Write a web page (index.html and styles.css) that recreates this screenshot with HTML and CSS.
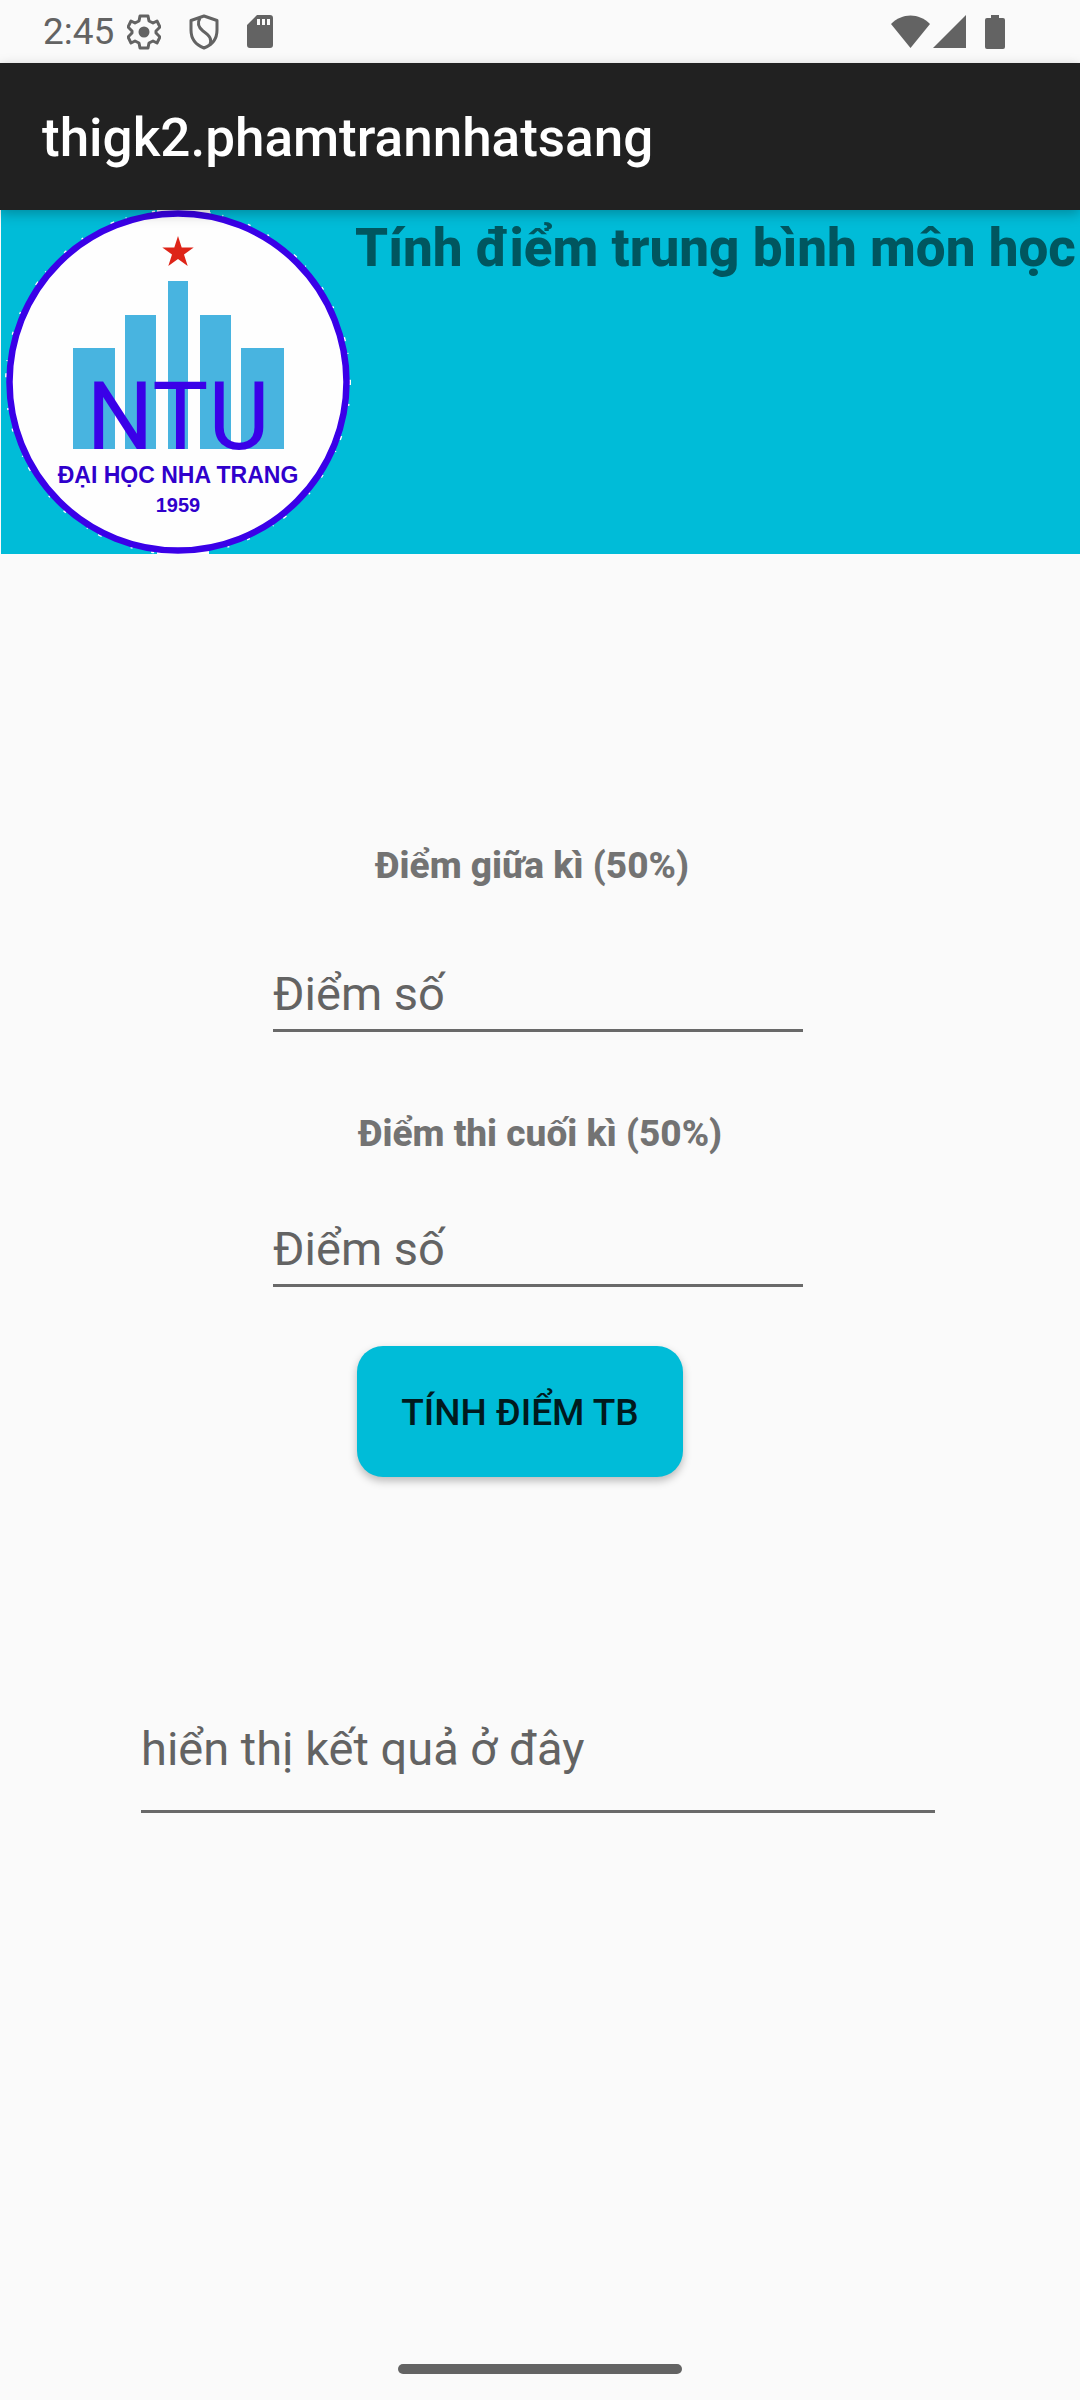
FILE: index.html
```html
<!DOCTYPE html>
<html lang="vi">
<head>
  <meta charset="utf-8">
  <meta name="viewport" content="width=device-width, initial-scale=1">
  <title>thigk2.phamtrannhatsang</title>
  <link rel="stylesheet" href="styles.css">
</head>
<body>
  <div class="status">
    <span class="clock">2:45</span>
    <div class="notices">
      <svg width="34" height="36" viewBox="0 0 34 36" fill="none" stroke="#636363" stroke-width="3" stroke-linejoin="round" aria-hidden="true">
        <path d="M13 2h8l1 5 4 2 4-2 3 6-4 4v2l4 4-3 6-4-2-4 2-1 5h-8l-1-5-4-2-4 2-3-6 4-4v-2l-4-4 3-6 4 2 4-2z"/>
        <circle cx="17" cy="18" r="5.500" fill="#636363" stroke="none"/>
      </svg>
      <svg width="30" height="36" viewBox="0 0 30 36" fill="none" stroke="#636363" stroke-width="3" stroke-linejoin="round" aria-hidden="true">
        <path d="M15 2L28 6.500V16c0 9-5 15-13 18C7 31 2 25 2 16V6.500z"/>
        <path d="M11 4C8 9 9 13 14 17c7 5 9 8 7 14"/>
      </svg>
      <svg width="26" height="34" viewBox="0 0 26 34" aria-hidden="true">
        <path fill="#636363" fill-rule="evenodd" d="M10 0h13a3 3 0 0 1 3 3v27a3 3 0 0 1-3 3H3a3 3 0 0 1-3-3V10zM10 4v6h3V4zm5 0v6h3V4zm5 0v6h3V4z"/>
      </svg>
    </div>
    <div class="system">
      <svg width="40" height="34" viewBox="0 0 40 34" fill="#636363" aria-hidden="true"><path d="M0 9C11-2.500 28-2.500 39 9L19.500 33z"/></svg>
      <svg width="34" height="34" viewBox="0 0 34 34" fill="#636363" aria-hidden="true"><path d="M33 0v33H0z"/></svg>
      <svg class="battery" width="20" height="34" viewBox="0 0 20 34" fill="#636363" aria-hidden="true"><path d="M6 0h8v3h4a2 2 0 0 1 2 2v27a2 2 0 0 1-2 2H2a2 2 0 0 1-2-2V5a2 2 0 0 1 2-2h4z"/></svg>
    </div>
  </div>

  <header class="appbar"><h1 class="appbar-title">thigk2.phamtrannhatsang</h1></header>

  <main class="content">
    <section class="banner">
      <svg class="logo" width="354" height="344" viewBox="1 0 354 344" role="img" aria-label="Đại học Nha Trang">
        <circle cx="178" cy="172" r="172" fill="none" stroke="#fff" stroke-width="2" stroke-dasharray="3 19 2 31 4 12 1 26"/>
        <path d="M157 0h53v3h-53zM157 344h52v-3h-52z" fill="#fff"/>
        <circle cx="178" cy="172" r="168.500" fill="#fefefe" stroke="#3a00e8" stroke-width="6.500"/>
        <path fill="#de2418" d="M178 26l3.700 11.400h12l-9.700 7.100 3.700 11.500-9.700-7.100-9.700 7.100 3.700-11.500-9.700-7.100h12z"/>
        <path fill="#48b4e0" d="M73 138h42v101H73zM125 105h31v134h-31zM168 71h20v168h-20zM200 105h31v134h-31zM241 138h43v101h-43z"/>
        <text class="logo-mark" x="178" y="239">NTU</text>
        <text class="logo-name" x="178" y="273">ĐẠI HỌC NHA TRANG</text>
        <text class="logo-year" x="178" y="302">1959</text>
      </svg>
      <h2 class="banner-title">Tính điểm trung bình môn học</h2>
    </section>

    <form class="form">
      <label class="label label-mid" for="midterm">Điểm giữa kì (50%)</label>
      <input class="field" id="midterm" type="text" inputmode="decimal" placeholder="Điểm số">
      <label class="label label-final" for="final">Điểm thi cuối kì (50%)</label>
      <input class="field field-final" id="final" type="text" inputmode="decimal" placeholder="Điểm số">
      <button class="submit" type="button">TÍNH ĐIỂM TB</button>
      <input class="field result" type="text" aria-label="Kết quả" placeholder="hiển thị kết quả ở đây">
    </form>
  </main>

  <footer class="navbar"><div class="handle"></div></footer>
</body>
</html>
```
FILE: styles.css
```css
* {
  box-sizing: border-box;
}

body {
  margin: 0;
  min-height: 100vh;
  display: flex;
  flex-direction: column;
  background: #fafafa;
  font-family: Roboto, "Noto Sans", sans-serif;
  overflow-x: hidden;
}

svg {
  display: block;
  flex: none;
}

.status {
  height: 63px;
  padding: 0 75px 0 43px;
  display: flex;
  align-items: center;
  color: #636363;
}

.clock {
  font-size: 37px;
  line-height: 44px;
}

.notices {
  display: flex;
  align-items: center;
  gap: 28px;
  margin-left: 13px;
}

.system {
  display: flex;
  align-items: center;
  gap: 2px;
  margin-left: auto;
}

.battery {
  margin-left: 16px;
}

.appbar {
  position: relative;
  height: 147px;
  padding: 3px 42px 0;
  display: flex;
  align-items: center;
  background: #212121;
  box-shadow: 0 4px 12px rgba(0, 0, 0, 0.26);
}

.appbar-title {
  margin: 0;
  color: #fff;
  font-size: 53px;
  line-height: 62px;
  font-weight: 500;
}

.content {
  flex: 1;
}

.banner {
  display: flex;
  align-items: flex-start;
  margin-left: 1px;
  background: #00bcd8;
}

.banner-title {
  margin: 7px 0 0;
  color: #00565f;
  font-size: 53px;
  line-height: 62px;
  font-weight: 800;
  white-space: nowrap;
}

.logo text {
  fill: #3a00e8;
  text-anchor: middle;
}

.logo .logo-mark {
  font-size: 94px;
}

.logo .logo-name,
.logo .logo-year {
  fill: #3000cc;
  font-family: "Liberation Sans", Arial, sans-serif;
  font-weight: 700;
}

.logo .logo-name {
  font-size: 23px;
}

.logo .logo-year {
  font-size: 20px;
}

.form {
  display: flex;
  flex-direction: column;
  align-items: center;
  padding-top: 290px;
}

.label {
  color: #737373;
  font-size: 37px;
  line-height: 44px;
  font-weight: 800;
}

.label-mid {
  margin-right: 16px;
}

.label-final {
  margin-top: 80px;
}

.field {
  width: 530px;
  max-width: 100%;
  height: 66px;
  margin: 78px 4px 0 0;
  padding: 0 0 9px;
  border: 0;
  border-bottom: 3px solid #696969;
  border-radius: 0;
  background: transparent;
  color: #212121;
  font: 400 47px/54px Roboto, "Noto Sans", sans-serif;
  outline: none;
}

.field::placeholder {
  color: #636363;
  opacity: 1;
}

.field-final {
  margin-top: 65px;
}

.submit {
  height: 131px;
  margin: 59px 40px 0 0;
  padding: 3px 44px 0;
  border: 0;
  border-radius: 26px;
  background: #00bcd8;
  box-shadow: 0 4px 8px rgba(0, 0, 0, 0.26);
  color: #001a1e;
  font: 500 37px/44px Roboto, "Noto Sans", sans-serif;
}

.result {
  width: 794px;
  height: 92px;
  margin-top: 244px;
  padding-bottom: 35px;
}

.navbar {
  display: flex;
  justify-content: center;
  padding: 26px 0;
}

.handle {
  width: 284px;
  height: 10px;
  border-radius: 5px;
  background: #636363;
}
```
